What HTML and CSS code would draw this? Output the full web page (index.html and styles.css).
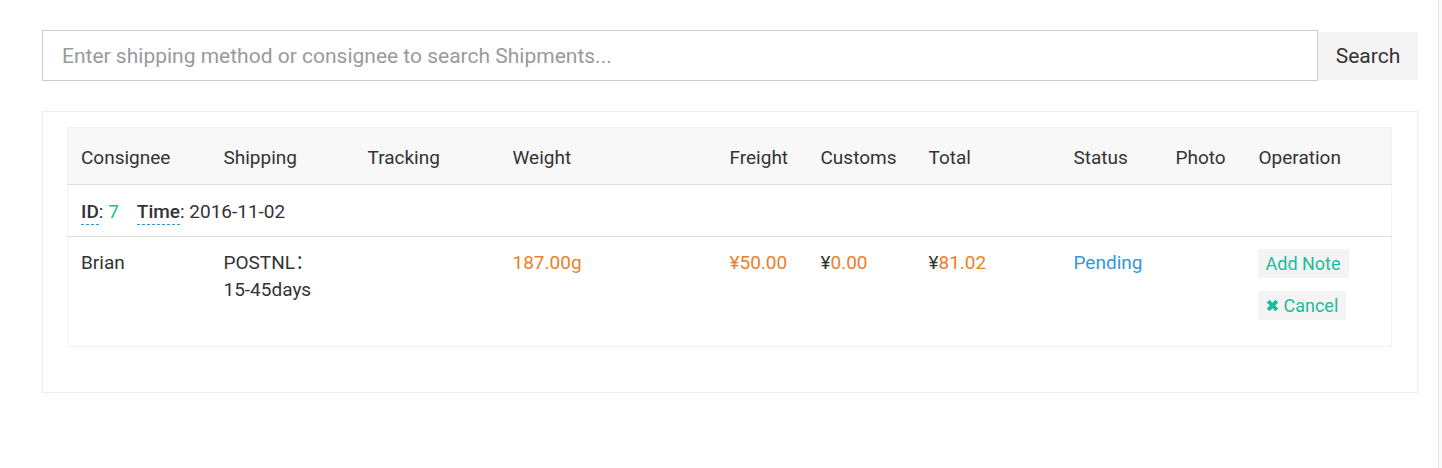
FILE: index.html
```html
<!DOCTYPE html>
<html>
<head>
<meta charset="utf-8">
<link rel="stylesheet" href="styles.css">
</head>
<body>
<div class="page">
  <div class="container">
    <form class="search">
      <input class="search-input" type="text" placeholder="Enter shipping method or consignee to search Shipments...">
      <button class="search-btn" type="button">Search</button>
    </form>
    <div class="panel">
      <table class="grid">
        <colgroup>
          <col style="width:143px"><col style="width:144px"><col style="width:145px"><col style="width:217px"><col style="width:91px"><col style="width:108px"><col style="width:145px"><col style="width:102px"><col style="width:83px"><col>
        </colgroup>
        <thead>
          <tr>
            <th>Consignee</th><th>Shipping</th><th>Tracking</th><th>Weight</th><th>Freight</th><th>Customs</th><th>Total</th><th>Status</th><th>Photo</th><th>Operation</th>
          </tr>
        </thead>
        <tbody>
          <tr class="meta">
            <td colspan="10"><abbr class="lbl">ID</abbr>: <span class="teal">7</span><span class="gap"></span><abbr class="lbl">Time</abbr>: 2016-11-02</td>
          </tr>
          <tr class="data">
            <td>Brian</td>
            <td><span class="cjk">POSTNL：</span><br>15-45days</td>
            <td></td>
            <td class="orange">187.00g</td>
            <td class="orange">¥50.00</td>
            <td>¥<span class="orange">0.00</span></td>
            <td>¥<span class="orange">81.02</span></td>
            <td class="blue">Pending</td>
            <td></td>
            <td>
              <div class="ops">
                <button class="op" type="button">Add Note</button>
                <button class="op" type="button"><svg class="x" viewBox="0 0 12 12" width="13" height="13"><path d="M2 2 L10 10 M10 2 L2 10" stroke="currentColor" stroke-width="3.6" stroke-linecap="butt"/></svg>Cancel</button>
              </div>
            </td>
          </tr>
        </tbody>
      </table>
    </div>
  </div>
</div>
</body>
</html>
```
FILE: styles.css
```css
html, body {
  margin: 0;
  padding: 0;
  background: #f9f9f9;
}
body {
  font-family: Roboto, "Liberation Sans", sans-serif;
  color: #333;
}
.page {
  width: 1439px;
  height: 468px;
  background: #fff;
  border-right: 1px solid #e8e8e8;
  box-sizing: border-box;
  padding-top: 30px;
}
.container {
  margin-left: 42px;
  width: 1376px;
}
.search {
  display: flex;
  align-items: center;
  margin: 0;
}
.search-input {
  flex: 1;
  height: 51px;
  box-sizing: border-box;
  border: 1px solid #ccc;
  padding: 0 19px;
  font-family: Roboto, "Liberation Sans", sans-serif;
  font-size: 21px;
  color: #333;
  outline: none;
  margin: 0;
}
.search-input::placeholder {
  color: #9a9a9a;
}
.search-btn {
  width: 100px;
  height: 48px;
  border: 0;
  background: #f4f4f4;
  font-family: Roboto, "Liberation Sans", sans-serif;
  font-size: 21px;
  color: #333;
  padding: 0;
  margin: 0;
}
.panel {
  margin-top: 30px;
  border: 1px solid #eee;
  padding: 15px 25px 45px 24px;
  height: 282px;
  box-sizing: border-box;
}
.grid {
  width: 100%;
  table-layout: fixed;
  border-collapse: collapse;
  border: 1px solid #f3f3f3;
  font-size: 19px;
}
.grid th {
  background: #f8f8f8;
  font-weight: normal;
  text-align: left;
  padding: 3px 0 0 13px;
  height: 57px;
  border-bottom: 1px solid #ddd;
  line-height: 27px;
  box-sizing: border-box;
}
.grid td {
  padding: 0 0 0 13px;
  vertical-align: top;
  line-height: 27px;
}
.cjk {
  font-family: Roboto, "Noto Sans CJK SC", sans-serif;
}
.meta td {
  height: 52px;
  vertical-align: middle;
  border-bottom: 1px solid #ddd;
  box-sizing: border-box;
  padding-top: 2px;
}
.lbl {
  font-weight: 500;
  text-decoration: none;
  border-bottom: 1px dashed #3498db;
  padding-bottom: 1px;
}
.gap {
  display: inline-block;
  width: 18px;
}
.teal { color: #1abc9c; }
.orange { color: #ee7e2a; }
.blue { color: #3498db; }
.data td {
  padding-top: 12px;
  height: 110px;
  box-sizing: border-box;
}
.ops {
  display: flex;
  flex-direction: column;
  align-items: flex-start;
  gap: 13px;
  margin-left: -1px;
}
.op {
  background: #f4f4f4;
  border: 0;
  color: #1abc9c;
  font-family: Roboto, "Liberation Sans", sans-serif;
  font-size: 18px;
  height: 29px;
  padding: 0 8px;
  display: flex;
  align-items: center;
  gap: 5px;
  margin: 0;
}
.x {
  display: block;
}
```
